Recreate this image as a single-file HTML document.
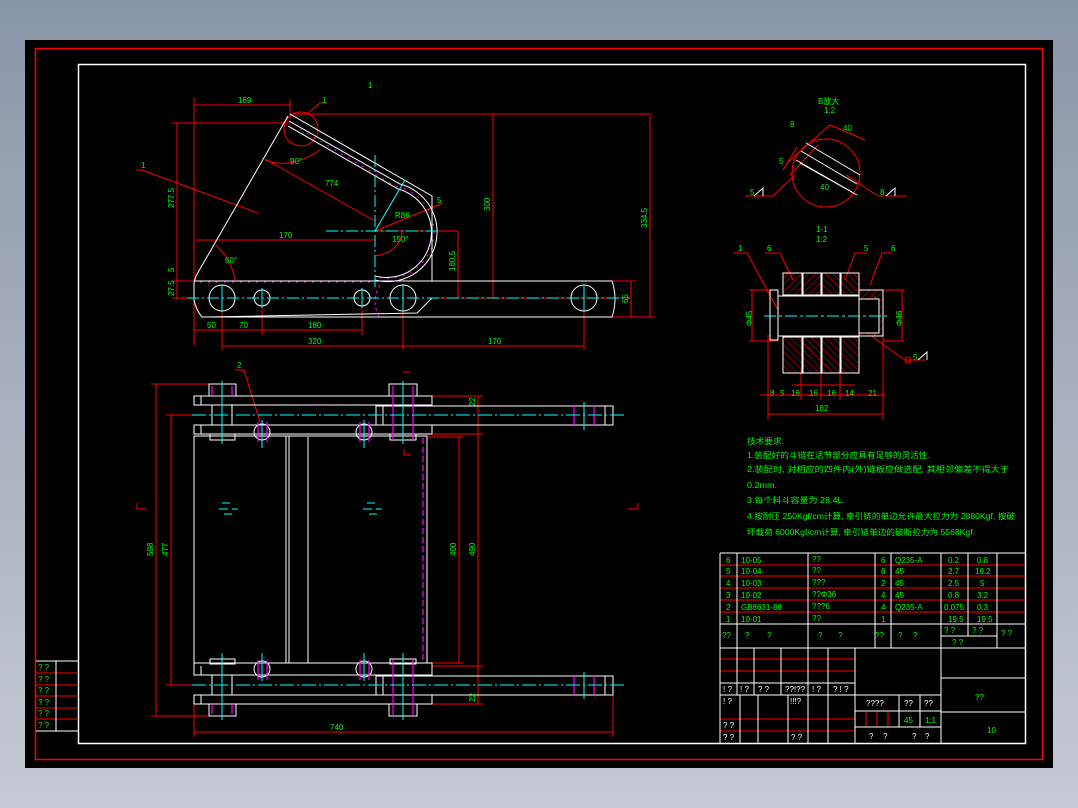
<!DOCTYPE html>
<html><head><meta charset="utf-8"><style>
html,body{margin:0;padding:0;width:1078px;height:808px;overflow:hidden;background:linear-gradient(#8996a8,#c6cad2);}
svg{display:block}
text{font-family:"Liberation Sans","Noto Sans CJK SC",sans-serif;fill:#00ff00;font-size:8px}
</style></head><body>
<svg width="1078" height="808" viewBox="0 0 1078 808" xmlns="http://www.w3.org/2000/svg">
<defs>
<pattern id="h" width="5" height="5" patternUnits="userSpaceOnUse" patternTransform="rotate(45)"><line x1="0" y1="0" x2="0" y2="5" stroke="#ff0000" stroke-width="1"/></pattern>
<pattern id="h2" width="5" height="5" patternUnits="userSpaceOnUse" patternTransform="rotate(-45)"><line x1="0" y1="0" x2="0" y2="5" stroke="#ff0000" stroke-width="1"/></pattern>
</defs>
<rect x="25" y="40" width="1028" height="728" fill="#000"/>
<rect x="35.5" y="48.5" width="1007" height="711" fill="none" stroke="#f00" stroke-width="1.5"/>
<rect x="78.5" y="64.5" width="947" height="679" fill="none" stroke="#fff" stroke-width="1.5"/>

<!-- left small table -->
<g stroke="#f00" stroke-width="1" fill="none">
<line x1="36" y1="673" x2="78" y2="673"/><line x1="36" y1="685" x2="78" y2="685"/><line x1="36" y1="696" x2="78" y2="696"/><line x1="36" y1="708" x2="78" y2="708"/><line x1="36" y1="719" x2="78" y2="719"/>
</g>
<g stroke="#fff" stroke-width="1"><line x1="36" y1="661" x2="78" y2="661"/><line x1="36" y1="731" x2="78" y2="731"/><line x1="56" y1="661" x2="56" y2="731"/></g>
<g font-size="8"><text x="38" y="670">? ?</text><text x="38" y="682">? ?</text><text x="38" y="693">? ?</text><text x="38" y="705">? ?</text><text x="38" y="716">? ?</text><text x="38" y="728">? ?</text></g>

<!-- ============ TOP VIEW ============ -->
<g fill="none" stroke="#f00" stroke-width="1">
<line x1="290" y1="114" x2="650" y2="114"/>
<line x1="172" y1="123" x2="290" y2="123"/>
<line x1="194" y1="98" x2="194" y2="345"/>
<line x1="194" y1="105" x2="290" y2="105"/><line x1="290" y1="100" x2="290" y2="118"/>
<line x1="177" y1="123" x2="177" y2="281"/>
<line x1="172" y1="281" x2="194" y2="281"/><line x1="172" y1="298" x2="194" y2="298"/>
<line x1="177" y1="281" x2="177" y2="300"/>
<line x1="196" y1="240" x2="375" y2="240"/>
<line x1="375" y1="231" x2="458" y2="231"/><line x1="458" y1="231" x2="458" y2="298"/>
<line x1="432" y1="298" x2="630" y2="298"/>
<line x1="493" y1="114" x2="493" y2="298"/>
<line x1="612" y1="281" x2="636" y2="281"/><line x1="612" y1="317" x2="655" y2="317"/>
<line x1="631" y1="281" x2="631" y2="317"/>
<line x1="650" y1="114" x2="650" y2="317"/>
<line x1="194" y1="330" x2="362" y2="330"/>
<line x1="222" y1="300" x2="222" y2="350"/><line x1="262" y1="300" x2="262" y2="335"/><line x1="362" y1="300" x2="362" y2="335"/>
<line x1="403" y1="300" x2="403" y2="350"/><line x1="584" y1="300" x2="584" y2="350"/>
<line x1="222" y1="346" x2="584" y2="346"/>
<line x1="142" y1="170" x2="258" y2="213"/><line x1="136" y1="170" x2="143" y2="170"/>
<line x1="265" y1="159" x2="375" y2="221"/>
<circle cx="301" cy="129" r="17"/>
<path d="M307 114 L320 103 L327 103"/>
<path d="M265 160 Q290 170 320 150"/>
<path d="M375 231 L443 203"/>
<path d="M375 231 L405 180"/>
<path d="M375 256 Q400 252 402 232"/>
<path d="M216 245 Q232 260 235 280"/>
</g>
<g fill="none" stroke="#fff" stroke-width="1">
<path d="M290 114 L432 196 L432 281"/>
<path d="M288 116 L196 276 L194 283 L194 300 Q196 310 202 317 L612 317 Q618 299 612 281 L194 281"/>
<path d="M289 121 L400 184 A49 49 0 0 1 375 280"/>
<path d="M288 126 L398 189 A44 44 0 0 1 375 276"/>
<path d="M208 317 L417 313 L432 298"/>
<circle cx="222" cy="298" r="13"/><circle cx="403" cy="298" r="13"/><circle cx="584" cy="298" r="13"/>
<circle cx="262" cy="298" r="8"/><circle cx="362" cy="298" r="8"/>
</g>
<g stroke="#ff00ff" stroke-width="1" stroke-dasharray="2 6" fill="none">
<line x1="200" y1="282" x2="375" y2="282"/>
<path d="M300 129 L395 186 A45 45 0 0 1 380 278"/>
<path d="M380 285 A30 30 0 0 0 380 318" stroke-dasharray="3 3"/>
</g>
<g stroke="#00ffff" stroke-width="1" fill="none" stroke-dasharray="12 3 2 3">
<line x1="187" y1="298" x2="630" y2="298"/>
<line x1="326" y1="231" x2="440" y2="231"/>
<line x1="375" y1="155" x2="375" y2="288"/>
<line x1="222" y1="285" x2="222" y2="312" stroke-dasharray="none"/><line x1="262" y1="288" x2="262" y2="308" stroke-dasharray="none"/><line x1="362" y1="288" x2="362" y2="308" stroke-dasharray="none"/><line x1="403" y1="285" x2="403" y2="312" stroke-dasharray="none"/><line x1="584" y1="285" x2="584" y2="312" stroke-dasharray="none"/>
<line x1="375" y1="231" x2="405" y2="180" stroke-dasharray="none"/>
</g>
<g font-size="7">
<text x="238" y="103">169</text><text x="322" y="103">1</text><text x="141" y="168">1</text>
<text x="290" y="164">90°</text><text x="325" y="186">774</text>
<text x="395" y="218">R86</text><text x="392" y="242">150°</text><text x="279" y="238">170</text>
<text x="225" y="263">60°</text><text x="437" y="203">5</text>
<text x="207" y="328">50</text><text x="239" y="328">70</text><text x="308" y="328">180</text>
<text x="308" y="344">320</text><text x="488" y="344">170</text>
<text x="368" y="88">1</text>
<text transform="translate(174,208) rotate(-90)">277.5</text>
<text transform="translate(174,272) rotate(-90)">5</text>
<text transform="translate(174,296) rotate(-90)">27.5</text>
<text transform="translate(455,271) rotate(-90)">180.5</text>
<text transform="translate(490,211) rotate(-90)">300</text>
<text transform="translate(647,228) rotate(-90)">334.5</text>
<text transform="translate(628,303) rotate(-90)">65</text>
</g>

<!-- ============ BOTTOM VIEW ============ -->
<g fill="none" stroke="#f00" stroke-width="1">
<line x1="151" y1="384" x2="209" y2="384"/><line x1="151" y1="716" x2="209" y2="716"/>
<line x1="156" y1="384" x2="156" y2="716"/>
<line x1="166" y1="415" x2="194" y2="415"/><line x1="166" y1="685" x2="194" y2="685"/>
<line x1="171" y1="415" x2="171" y2="685"/>
<line x1="432" y1="396" x2="483" y2="396"/><line x1="432" y1="434" x2="483" y2="434"/><line x1="427" y1="437" x2="463" y2="437"/><line x1="427" y1="663" x2="463" y2="663"/><line x1="432" y1="666" x2="483" y2="666"/><line x1="432" y1="704" x2="483" y2="704"/>
<line x1="459" y1="437" x2="459" y2="663"/>
<line x1="478" y1="396" x2="478" y2="704"/>
<line x1="194" y1="704" x2="194" y2="737"/><line x1="613" y1="695" x2="613" y2="737"/>
<line x1="194" y1="732" x2="613" y2="732"/>
<path d="M244 370 L260 422"/><path d="M235 370 L244 370"/>
<path d="M137 503 L137 509 L147 509"/><path d="M628 509 L638 509 L638 503"/>
<path d="M403 372 L410 372"/><path d="M404 449 L404 455 L411 455"/>
</g>
<g fill="none" stroke="#fff" stroke-width="1">
<rect x="209" y="384" width="27" height="12"/><rect x="389" y="384" width="28" height="12"/>
<rect x="194" y="396" width="238" height="9"/><line x1="201" y1="396" x2="201" y2="405"/>
<rect x="376" y="406" width="237" height="19"/><line x1="383" y1="406" x2="383" y2="425"/><line x1="605" y1="406" x2="605" y2="425"/>
<rect x="194" y="425" width="238" height="9"/><line x1="201" y1="425" x2="201" y2="434"/>
<rect x="210" y="434" width="25" height="6"/><rect x="390" y="434" width="26" height="6"/>
<rect x="194" y="436" width="233" height="227"/><line x1="286" y1="436" x2="286" y2="663"/><line x1="289" y1="436" x2="289" y2="663"/><line x1="308" y1="437" x2="308" y2="663"/>
<line x1="212" y1="405" x2="212" y2="425"/><line x1="232" y1="405" x2="232" y2="425"/>
<rect x="210" y="659" width="25" height="5"/><rect x="390" y="659" width="26" height="5"/>
<rect x="194" y="663" width="238" height="12"/><line x1="201" y1="666" x2="201" y2="675"/>
<rect x="376" y="676" width="237" height="19"/><line x1="383" y1="676" x2="383" y2="695"/><line x1="605" y1="676" x2="605" y2="695"/>
<rect x="194" y="695" width="238" height="9"/><line x1="201" y1="695" x2="201" y2="704"/>
<rect x="209" y="704" width="27" height="12"/><rect x="389" y="704" width="28" height="12"/>
<line x1="212" y1="675" x2="212" y2="695"/><line x1="232" y1="675" x2="232" y2="695"/>
<circle cx="262" cy="432" r="8"/><circle cx="364" cy="432" r="8"/><circle cx="262" cy="669" r="8"/><circle cx="364" cy="669" r="8"/>
</g>
<g stroke="#ff00ff" stroke-width="1.2" fill="none">
<line x1="212" y1="386" x2="212" y2="396"/><line x1="232" y1="386" x2="232" y2="396"/><line x1="393" y1="386" x2="393" y2="440"/><line x1="413" y1="386" x2="413" y2="440"/>
<line x1="258" y1="422" x2="258" y2="442"/><line x1="267" y1="422" x2="267" y2="442"/><line x1="360" y1="422" x2="360" y2="442"/><line x1="369" y1="422" x2="369" y2="442"/>
<line x1="258" y1="660" x2="258" y2="680"/><line x1="267" y1="660" x2="267" y2="680"/><line x1="360" y1="660" x2="360" y2="680"/><line x1="369" y1="660" x2="369" y2="680"/>
<line x1="393" y1="660" x2="393" y2="716"/><line x1="413" y1="660" x2="413" y2="716"/><line x1="212" y1="704" x2="212" y2="714"/><line x1="232" y1="704" x2="232" y2="714"/>
<line x1="574" y1="406" x2="574" y2="425"/><line x1="594" y1="406" x2="594" y2="425"/><line x1="574" y1="676" x2="574" y2="695"/><line x1="594" y1="676" x2="594" y2="695"/>
<line x1="423" y1="438" x2="423" y2="662" stroke-dasharray="6 3"/>
</g>
<g stroke="#00ffff" stroke-width="1" fill="none">
<line x1="192" y1="415" x2="624" y2="415" stroke-dasharray="14 3 2 3"/><line x1="192" y1="685" x2="624" y2="685" stroke-dasharray="14 3 2 3"/>
<line x1="222" y1="381" x2="222" y2="444"/><line x1="222" y1="653" x2="222" y2="720"/>
<line x1="403" y1="381" x2="403" y2="444"/><line x1="403" y1="653" x2="403" y2="720"/>
<line x1="262" y1="420" x2="262" y2="448"/><line x1="364" y1="420" x2="364" y2="448"/><line x1="262" y1="653" x2="262" y2="681"/><line x1="364" y1="653" x2="364" y2="681"/>
<line x1="584" y1="402" x2="584" y2="430"/><line x1="584" y1="672" x2="584" y2="699"/>
<path d="M222 503h8M219 509h9M232 509h6M224 514h8"/><path d="M367 503h8M363 509h9M376 509h6M369 514h8"/>
</g>
<g font-size="7">
<text x="237" y="368">2</text><text x="330" y="730">740</text>
<text transform="translate(153,556) rotate(-90)">598</text>
<text transform="translate(168,556) rotate(-90)">477</text>
<text transform="translate(456,556) rotate(-90)">400</text>
<text transform="translate(475,556) rotate(-90)">490</text>
<text transform="translate(475,406) rotate(-90)">22</text><text transform="translate(475,702) rotate(-90)">22</text>
</g>

<!-- ============ DETAIL B ============ -->
<g font-size="7"><text x="818" y="104">B放大</text><text x="824" y="113">1:2</text>
<text x="816" y="232">1-1</text><text x="816" y="242">1:2</text>
<text x="738" y="251">1</text><text x="767" y="251">6</text><text x="864" y="251">5</text><text x="891" y="251">6</text>
<text x="750" y="195">5</text><text x="880" y="195">8</text><text x="913" y="360">5</text>
<text x="843" y="131">40</text><text x="820" y="190">40</text><text x="790" y="127">8</text><text x="779" y="164">5</text>
<text x="770" y="396">8</text><text x="780" y="396">5</text><text x="791" y="396">16</text><text x="809" y="396">16</text><text x="827" y="396">16</text><text x="845" y="396">14</text><text x="868" y="396">21</text>
<text x="815" y="411">182</text>
<text transform="translate(752,326) rotate(-90)">Φ45</text><text transform="translate(902,326) rotate(-90)">Φ46</text>
</g>
<g fill="none" stroke="#f00" stroke-width="1">
<circle cx="826" cy="173" r="34"/>
<path d="M745 196 L773 196 L795 175"/><path d="M907 196 L878 196 L846 175"/>
<path d="M787 163 L830 125 L865 140"/><path d="M783 170 L797 147"/><path d="M790 175 L818 145"/>
<path d="M733 253 L747 253 L778 310"/><path d="M765 253 L780 253 L793 280"/><path d="M867 253 L855 253 L845 280"/><path d="M893 253 L882 253 L870 285"/>
<line x1="749" y1="290" x2="778" y2="290"/><line x1="749" y1="341" x2="778" y2="341"/><line x1="752" y1="290" x2="752" y2="341"/>
<line x1="883" y1="290" x2="904" y2="290"/><line x1="883" y1="341" x2="904" y2="341"/><line x1="902" y1="290" x2="902" y2="341"/>
<line x1="768" y1="335" x2="768" y2="420"/><line x1="883" y1="335" x2="883" y2="420"/>
<line x1="760" y1="395" x2="885" y2="395"/><line x1="768" y1="414" x2="883" y2="414"/>
<line x1="792" y1="385" x2="855" y2="385"/>
<line x1="801" y1="370" x2="801" y2="400"/><line x1="821" y1="370" x2="821" y2="400"/><line x1="840" y1="370" x2="840" y2="400"/>
<path d="M870 335 L905 360 L925 360"/><circle cx="908" cy="360" r="3"/>
<line x1="808" y1="296" x2="808" y2="336"/><line x1="875" y1="296" x2="875" y2="336"/>
</g>
<g fill="none" stroke="#fff" stroke-width="1">
<path d="M806 143 L860 175 M801 151 L857 184 M796 160 L852 192 M800 163 L857 195"/>
<path d="M754 196 L763 188 L763 196" /><path d="M886 196 L895 188 L895 196"/><path d="M918 360 L927 352 L927 360"/>
</g>
<g stroke="#fff" stroke-width="1">
<rect x="783" y="273" width="19" height="22" fill="url(#h)"/><rect x="803" y="273" width="18" height="22" fill="url(#h)"/><rect x="822" y="273" width="18" height="22" fill="url(#h2)"/><rect x="841" y="273" width="18" height="22" fill="url(#h2)"/>
<rect x="783" y="337" width="19" height="36" fill="url(#h2)"/><rect x="803" y="337" width="18" height="36" fill="url(#h2)"/><rect x="822" y="337" width="18" height="36" fill="url(#h2)"/><rect x="841" y="337" width="18" height="36" fill="url(#h2)"/>
<rect x="859" y="290" width="24" height="46" fill="url(#h)"/>
<rect x="778" y="296" width="81" height="40" fill="#000"/><rect x="859" y="299" width="20" height="34" fill="#000"/>
<rect x="770" y="290" width="8" height="50" fill="none"/>
</g>
<line x1="764" y1="316" x2="890" y2="316" stroke="#0ff" stroke-dasharray="12 3 3 3"/>

<!-- ============ NOTES ============ -->
<g font-size="10">
<text x="747" y="444" textLength="37" lengthAdjust="spacingAndGlyphs">技术要求:</text>
<text x="747" y="458" textLength="183" lengthAdjust="spacingAndGlyphs">1.装配好的斗链在活节部分应具有足够的灵活性.</text>
<text x="747" y="472" textLength="262" lengthAdjust="spacingAndGlyphs">2.装配时, 对相应的四件内(外)链板应做选配, 其相邻偏差不得大于</text>
<text x="747" y="488" textLength="30" lengthAdjust="spacingAndGlyphs">0.2mm.</text>
<text x="747" y="503" textLength="98" lengthAdjust="spacingAndGlyphs">3.每个料斗容量为 28.4L.</text>
<text x="747" y="519" textLength="268" lengthAdjust="spacingAndGlyphs">4.按耐压 250Kgf/cm计算, 牵引链的单边允许最大拉力为 2880Kgf, 按破</text>
<text x="747" y="535" textLength="228" lengthAdjust="spacingAndGlyphs">坏载荷 6000Kgf/cm计算, 牵引链单边的破断拉力为 5568Kgf.</text>
</g>

<!-- ============ TITLE BLOCK ============ -->
<g stroke="#f00" stroke-width="1">
<line x1="720" y1="565" x2="1025" y2="565"/><line x1="720" y1="576" x2="1025" y2="576"/><line x1="720" y1="588" x2="1025" y2="588"/><line x1="720" y1="600" x2="1025" y2="600"/><line x1="720" y1="612" x2="1025" y2="612"/>
<line x1="720" y1="659" x2="855" y2="659"/><line x1="720" y1="671" x2="855" y2="671"/><line x1="720" y1="719" x2="855" y2="719"/><line x1="720" y1="731" x2="855" y2="731"/>
<line x1="866" y1="712" x2="866" y2="727"/><line x1="877" y1="712" x2="877" y2="727"/><line x1="888" y1="712" x2="888" y2="727"/>
</g>
<g stroke="#fff" stroke-width="1" fill="none">
<line x1="720" y1="553" x2="1025" y2="553"/><line x1="720" y1="624" x2="1025" y2="624"/><line x1="720" y1="648" x2="1025" y2="648"/>
<line x1="720" y1="553" x2="720" y2="743"/>
<line x1="737" y1="553" x2="737" y2="648"/><line x1="808" y1="553" x2="808" y2="648"/><line x1="875" y1="553" x2="875" y2="648"/><line x1="891" y1="553" x2="891" y2="648"/><line x1="941" y1="553" x2="941" y2="648"/><line x1="968" y1="553" x2="968" y2="636"/><line x1="997" y1="553" x2="997" y2="648"/>
<line x1="941" y1="636" x2="997" y2="636"/>
<line x1="720" y1="683" x2="855" y2="683"/><line x1="720" y1="695" x2="855" y2="695"/>
<line x1="737" y1="648" x2="737" y2="695"/><line x1="754" y1="648" x2="754" y2="695"/><line x1="781" y1="648" x2="781" y2="695"/><line x1="808" y1="648" x2="808" y2="743"/><line x1="828" y1="648" x2="828" y2="743"/>
<line x1="740" y1="695" x2="740" y2="743"/><line x1="758" y1="695" x2="758" y2="743"/><line x1="788" y1="695" x2="788" y2="743"/>
<line x1="855" y1="648" x2="855" y2="743"/>
<line x1="855" y1="695" x2="941" y2="695"/><line x1="855" y1="727" x2="941" y2="727"/><line x1="855" y1="711" x2="941" y2="711"/>
<line x1="899" y1="695" x2="899" y2="727"/><line x1="920" y1="695" x2="920" y2="727"/>
<line x1="941" y1="648" x2="941" y2="743"/>
<line x1="941" y1="678" x2="1025" y2="678"/><line x1="941" y1="712" x2="1025" y2="712"/>
</g>
<g font-size="9">
<text x="726" y="563">6</text><text x="741" y="563">10-05</text><text x="812" y="562">??</text><text x="881" y="563">6</text><text x="895" y="563">Q235-A</text><text x="948" y="563">0.2</text><text x="977" y="563">0.8</text>
<text x="726" y="574">5</text><text x="741" y="574">10-04</text><text x="812" y="573">??</text><text x="881" y="574">6</text><text x="895" y="574">45</text><text x="948" y="574">2.7</text><text x="975" y="574">16.2</text>
<text x="726" y="586">4</text><text x="741" y="586">10-03</text><text x="812" y="585">???</text><text x="881" y="586">2</text><text x="895" y="586">45</text><text x="948" y="586">2.5</text><text x="980" y="586">5</text>
<text x="726" y="598">3</text><text x="741" y="598">10-02</text><text x="812" y="597">??Φ36</text><text x="881" y="598">4</text><text x="895" y="598">45</text><text x="948" y="598">0.8</text><text x="977" y="598">3.2</text>
<text x="726" y="610">2</text><text x="741" y="610">GB8631-86</text><text x="812" y="609">???6</text><text x="881" y="610">4</text><text x="895" y="610">Q235-A</text><text x="944" y="610">0.075</text><text x="977" y="610">0.3</text>
<text x="726" y="622">1</text><text x="741" y="622">10-01</text><text x="812" y="621">??</text><text x="881" y="622">1</text><text x="948" y="622">19.5</text><text x="977" y="622">19.5</text>
<text x="722" y="638">??</text><text x="745" y="638">?</text><text x="767" y="638">?</text><text x="818" y="638">?</text><text x="838" y="638">?</text><text x="875" y="638">??</text><text x="898" y="638">?</text><text x="913" y="638">?</text>
<text x="944" y="633">? ?</text><text x="972" y="633">? ?</text><text x="952" y="645">? ?</text><text x="1001" y="636">? ?</text>
</g>
<g font-size="7" fill="#fff" style="fill:#fff">
<text x="723" y="692" style="fill:#fff">! ?</text><text x="740" y="692" style="fill:#fff">! ?</text><text x="758" y="692" style="fill:#fff">? ?</text><text x="785" y="692" style="fill:#fff">??!??</text><text x="812" y="692" style="fill:#fff">! ?</text><text x="833" y="692" style="fill:#fff">? ! ?</text>
<text x="723" y="704" style="fill:#fff">! ?</text><text x="790" y="704" style="fill:#fff">!!!?</text>
<text x="723" y="728" style="fill:#fff">? ?</text><text x="723" y="740" style="fill:#fff">? ?</text><text x="791" y="740" style="fill:#fff">? ?</text>
<text x="866" y="706" style="fill:#fff">????</text><text x="904" y="706" style="fill:#fff">??</text><text x="924" y="706" style="fill:#fff">??</text>
<text x="869" y="739" style="fill:#fff">?</text><text x="883" y="739" style="fill:#fff">?</text><text x="912" y="739" style="fill:#fff">?</text><text x="925" y="739" style="fill:#fff">?</text>
</g>
<g font-size="10"><text x="904" y="723">45</text><text x="925" y="723">1:1</text><text x="975" y="700">??</text><text x="987" y="733">10</text></g>
</svg>
</body></html>
